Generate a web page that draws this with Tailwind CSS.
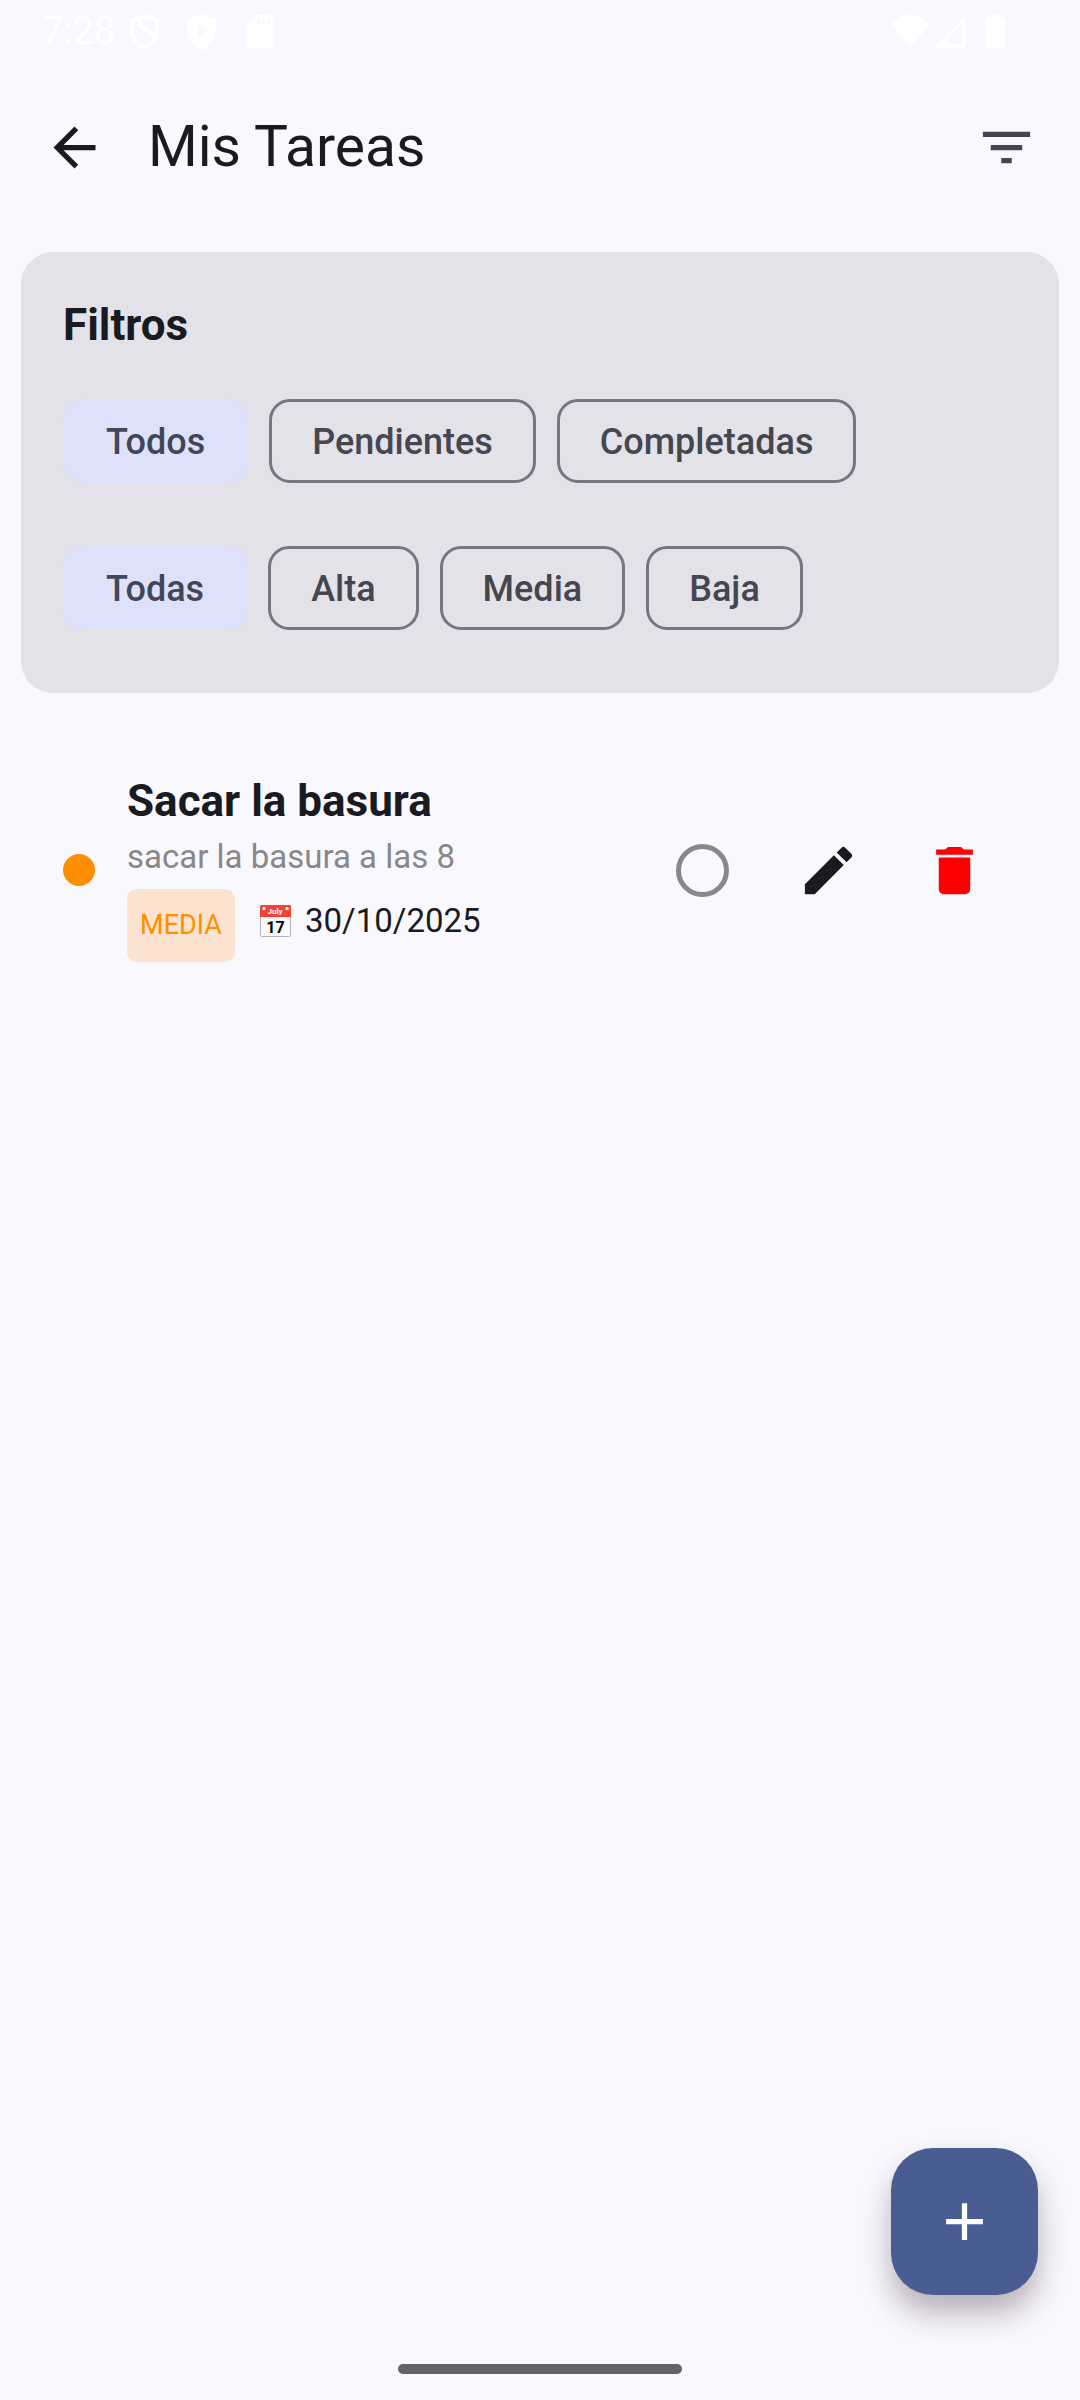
<!DOCTYPE html>
<html lang="es">
<head>
<meta charset="utf-8">
<meta name="viewport" content="width=device-width, initial-scale=1">
<title>Mis Tareas</title>
<script src="https://cdn.jsdelivr.net/npm/@tailwindcss/browser@4"></script>
</head>
<body class="flex min-h-screen flex-col bg-[#faf8ff] font-['Roboto',sans-serif] text-[#1a1b21]">

  <!-- System status bar -->
  <div class="flex h-[63px] shrink-0 items-start justify-between pr-[75px] pl-[42px] text-white">
    <div class="flex h-[63px] items-center">
      <span class="w-[88px] text-[38px] leading-[63px]">7:28</span>
      <svg class="mr-[28px] h-[36px] w-[29px]" viewBox="0 0 29 36" fill="none" stroke="currentColor" stroke-width="4" aria-hidden="true"><path d="M14.500 2L27 6.500V16c0 8-5 14.500-12.500 17.500C7 30.500 2 24 2 16V6.500zM10 3v5c0 9 14 8 15 17"/></svg>
      <svg class="mr-[31px] h-[36px] w-[29px]" viewBox="0 0 29 36" fill="currentColor" fill-rule="evenodd" aria-hidden="true"><path d="M14.500 0L29 5.500V16c0 9-5.500 17-14.500 20C5.500 33 0 25 0 16V5.500zM10.500 11v13l11-6.500z"/></svg>
      <svg class="h-[33px] w-[26px]" viewBox="0 0 26 33" fill="currentColor" fill-rule="evenodd" aria-hidden="true"><path d="M9 0h14q3 0 3 3v27q0 3-3 3H3q-3 0-3-3V10zM10 4v6h3V4zM15 4v6h3V4zM20 4v6h3V4z"/></svg>
    </div>
    <div class="flex h-[62px] items-center">
      <svg class="mr-[3px] h-[33px] w-[39px]" viewBox="0 0 39 33" fill="currentColor" aria-hidden="true"><path d="M19.500 33L0 9Q8 0 19.500 0T39 9z"/></svg>
      <svg class="mr-[19px] h-[33px] w-[33px]" viewBox="0 0 33 33" fill="currentColor" fill-rule="evenodd" aria-hidden="true"><path d="M33 0v33H0zM29 9L15 23v6h14z"/></svg>
      <svg class="h-[34px] w-[20px]" viewBox="0 0 20 34" fill="currentColor" aria-hidden="true"><path d="M6 0h8v3h4q2 0 2 2v27q0 2-2 2H2q-2 0-2-2V5q0-2 2-2h4z"/></svg>
    </div>
  </div>

  <!-- App bar -->
  <header class="flex h-[168px] shrink-0 items-center pr-[42px] pl-[43px]">
    <button type="button" aria-label="Volver" class="mr-[42px]">
      <svg class="size-[63px]" viewBox="0 0 24 24" fill="currentColor" aria-hidden="true"><path d="M20 11H7.830l5.590-5.590L12 4l-8 8 8 8 1.410-1.410L7.830 13H20z"/></svg>
    </button>
    <h1 class="grow text-[57px] leading-[76px]">Mis Tareas</h1>
    <button type="button" aria-label="Filtrar" class="text-[#45464f]">
      <svg class="size-[63px]" viewBox="0 0 24 24" fill="currentColor" aria-hidden="true"><path d="M10 18h4v-2h-4zM3 6v2h18V6zm3 7h12v-2H6z"/></svg>
    </button>
  </header>

  <main class="px-[21px] pt-[21px]">
    <!-- Filters -->
    <section class="rounded-[32px] bg-[#e3e2e9] px-[42px] pt-[42px] pb-[63px]">
      <h2 class="mb-[42px] text-[44px] leading-[63px] font-bold">Filtros</h2>
      <div class="mb-[63px] flex gap-[21px] text-[36px] leading-[52px] font-medium text-[#45464f]" role="group" aria-label="Estado">
        <button type="button" aria-pressed="true" class="h-[84px] rounded-[21px] bg-[#dde1f9] px-[43px] pt-[2px] text-[#414659]">Todos</button>
        <button type="button" aria-pressed="false" class="h-[84px] rounded-[21px] border-[3px] border-[#757780] px-[40px] pt-[2px]">Pendientes</button>
        <button type="button" aria-pressed="false" class="h-[84px] rounded-[21px] border-[3px] border-[#757780] px-[40px] pt-[2px]">Completadas</button>
      </div>
      <div class="flex gap-[21px] text-[36px] leading-[52px] font-medium text-[#45464f]" role="group" aria-label="Prioridad">
        <button type="button" aria-pressed="true" class="h-[84px] rounded-[21px] bg-[#dde1f9] px-[43px] pt-[2px] text-[#414659]">Todas</button>
        <button type="button" aria-pressed="false" class="h-[84px] rounded-[21px] border-[3px] border-[#757780] px-[40px] pt-[2px]">Alta</button>
        <button type="button" aria-pressed="false" class="h-[84px] rounded-[21px] border-[3px] border-[#757780] px-[40px] pt-[2px]">Media</button>
        <button type="button" aria-pressed="false" class="h-[84px] rounded-[21px] border-[3px] border-[#757780] px-[40px] pt-[2px]">Baja</button>
      </div>
    </section>

    <!-- Task list -->
    <ul class="px-[42px] pt-[77px]">
      <li class="flex items-center">
        <span class="mr-[32px] size-[32px] shrink-0 rounded-full bg-[#ff8f00]"></span>
        <div class="grow pb-[8px]">
          <h3 class="text-[44px] leading-[63px] font-bold">Sacar la basura</h3>
          <p class="mb-[8px] text-[33px] leading-[48px] text-[#888888]">sacar la basura a las 8</p>
          <div class="flex items-start">
            <span class="mr-[25px] h-[73px] min-w-[108px] rounded-[10px] bg-[#fbe3cf] px-[11px] text-center text-[27px] leading-[73px] text-[#ff8f00]">MEDIA</span>
            <span class="flex items-center text-[33px] leading-[63px]">
              <svg class="mr-[14px] h-[32px] w-[31px]" viewBox="0 0 31 32" role="img" aria-label="Calendario">
                <rect x="0.500" y="0.500" width="30" height="31" rx="1.500" fill="#fafafa" stroke="#b5b5b5"/>
                <path d="M0 12V1.500Q0 0 1.500 0h28Q31 0 31 1.500V12z" fill="#f44336"/>
                <circle cx="4" cy="3.500" r="1.700" fill="#fff"/><circle cx="27" cy="3.500" r="1.700" fill="#fff"/>
                <text x="15" y="9" text-anchor="middle" font-size="8" font-weight="700" fill="#fff">July</text>
                <text x="15.500" y="28" text-anchor="middle" font-size="16" font-weight="700" fill="#000">17</text>
              </svg>
              <time datetime="2025-10-30">30/10/2025</time>
            </span>
          </div>
        </div>
        <label class="flex size-[126px] shrink-0 items-center justify-center">
          <input type="checkbox" aria-label="Completada" class="size-[53px] appearance-none rounded-full border-[5px] border-[#888888] checked:bg-[#888888]">
        </label>
        <button type="button" aria-label="Editar" class="flex size-[126px] shrink-0 items-center justify-center">
          <svg class="size-[63px]" viewBox="0 0 24 24" fill="currentColor" aria-hidden="true"><path d="M3 17.250V21h3.750L17.810 9.940l-3.750-3.750zM20.710 7.040c.390-.390.390-1.020 0-1.410l-2.340-2.340c-.390-.390-1.020-.390-1.410 0l-1.830 1.830 3.750 3.750z"/></svg>
        </button>
        <button type="button" aria-label="Eliminar" class="flex size-[126px] shrink-0 items-center justify-center text-[#ff0000]">
          <svg class="size-[63px]" viewBox="0 0 24 24" fill="currentColor" aria-hidden="true"><path d="M6 19c0 1.100.900 2 2 2h8c1.100 0 2-.900 2-2V7H6zM19 4h-3.500l-1-1h-5l-1 1H5v2h14z"/></svg>
        </button>
      </li>
    </ul>
  </main>

  <!-- Floating action button -->
  <button type="button" aria-label="Agregar tarea" class="fixed right-[42px] bottom-[105px] flex size-[147px] items-center justify-center rounded-[42px] bg-[#495d92] text-white shadow-[0_18px_30px_rgba(40,25,35,0.32)]">
    <svg class="size-[63px]" viewBox="0 0 24 24" fill="currentColor" aria-hidden="true"><path d="M19 13h-6v6h-2v-6H5v-2h6V5h2v6h6z"/></svg>
  </button>

  <!-- Gesture handle -->
  <div class="mt-auto flex justify-center pt-[26px] pb-[26px]">
    <div class="h-[10px] w-[284px] rounded-full bg-[#646466]"></div>
  </div>
</body>
</html>
